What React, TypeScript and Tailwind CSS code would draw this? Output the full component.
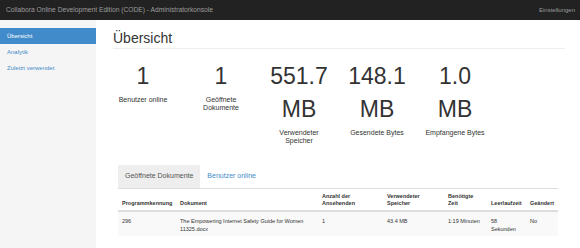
import React from 'react';

const stats = [
  { value: ['1'], label: ['Benutzer online'] },
  { value: ['1'], label: ['Geöffnete', 'Dokumente'] },
  { value: ['551.7', 'MB'], label: ['Verwendeter', 'Speicher'] },
  { value: ['148.1', 'MB'], label: ['Gesendete Bytes'] },
  { value: ['1.0', 'MB'], label: ['Empfangene Bytes'] },
];

const columns = [
  { title: ['Programmkennung'], w: 'w-[58px]' },
  { title: ['Dokument'], w: 'w-[142px]' },
  { title: ['Anzahl der', 'Ansehenden'], w: 'w-[65px]' },
  { title: ['Verwendeter', 'Speicher'], w: 'w-[61px]' },
  { title: ['Benötigte', 'Zeit'], w: 'w-[43px]' },
  { title: ['Leerlaufzeit'], w: 'w-[39px]' },
  { title: ['Geändert'], w: 'w-[32px]' },
];

const row = [
  ['296'],
  ['The Empowering Internet Safety Guide for Women', '11325.docx'],
  ['1'],
  ['43.4 MB'],
  ['1:19 Minuten'],
  ['58', 'Sekunden'],
  ['No'],
];

const App = () => {
  return (
    <div className="w-[580px] h-[248px] overflow-hidden bg-white text-[#333] font-['Liberation_Sans',Arial,sans-serif]">
      <nav className="h-[20px] bg-[#222] flex items-center justify-between pl-[6px] pr-[5px]">
        <span className="text-[6.7px] text-[#9d9d9d]">Collabora Online Development Edition (CODE) - Administratorkonsole</span>
        <span className="text-[6px] text-[#9d9d9d]">Einstellungen</span>
      </nav>

      <div className="flex">
        <aside className="w-[96px] h-[228px] bg-[#f5f5f5] pt-[8px] text-[6px]">
          <div className="h-[16px] flex items-center pl-[7px] bg-[#428bca] text-white">Übersicht</div>
          <div className="h-[16px] flex items-center pl-[7px] text-[#428bca]">Analytik</div>
          <div className="h-[16px] flex items-center pl-[7px] text-[#428bca]">Zuletzt verwendet</div>
        </aside>

        <main className="flex-1 pl-[17px] pr-[15px]">
          <div className="mt-[10px] pb-[2px] border-b border-[#eee]">
            <h1 className="text-[14px] leading-[16px]">Übersicht</h1>
          </div>

          <div className="flex ml-[-9px] mt-[11px]">
            {stats.map((s, i) => (
              <div key={i} className="w-[78px] text-center">
                {s.value.map((v) => (
                  <div key={v} className="text-[23px] leading-[33px]">{v}</div>
                ))}
                <div className="mt-[3px] text-[7px] leading-[8px]">
                  {s.label.map((l) => (
                    <div key={l}>{l}</div>
                  ))}
                </div>
              </div>
            ))}
          </div>

          <div className="ml-[5px] mr-[7px] mt-[20px]">
            <div className="flex h-[24px] border-b border-[#ddd] text-[7px]">
              <div className="px-[7px] flex items-center bg-[#eee] text-[#555]">Geöffnete Dokumente</div>
              <div className="px-[7px] flex items-center text-[#428bca]">Benutzer online</div>
            </div>

            <table className="w-[440px] table-fixed border-collapse text-[5.5px]">
              <thead>
                <tr className="border-b-2 border-[#ddd]">
                  {columns.map((c, i) => (
                    <th key={i} className={`${c.w} align-bottom text-left font-bold leading-[6.5px] px-[4px] pt-[4px] pb-[4px]`}>
                      {c.title.map((t) => (
                        <div key={t}>{t}</div>
                      ))}
                    </th>
                  ))}
                </tr>
              </thead>
              <tbody>
                <tr className="bg-[#f9f9f9]">
                  {row.map((cell, i) => (
                    <td key={i} className="align-top leading-[7.5px] px-[4px] pt-[6px] pb-[3px]">
                      {cell.map((t) => (
                        <div key={t}>{t}</div>
                      ))}
                    </td>
                  ))}
                </tr>
              </tbody>
            </table>
          </div>
        </main>
      </div>
    </div>
  );
};

export default App;
